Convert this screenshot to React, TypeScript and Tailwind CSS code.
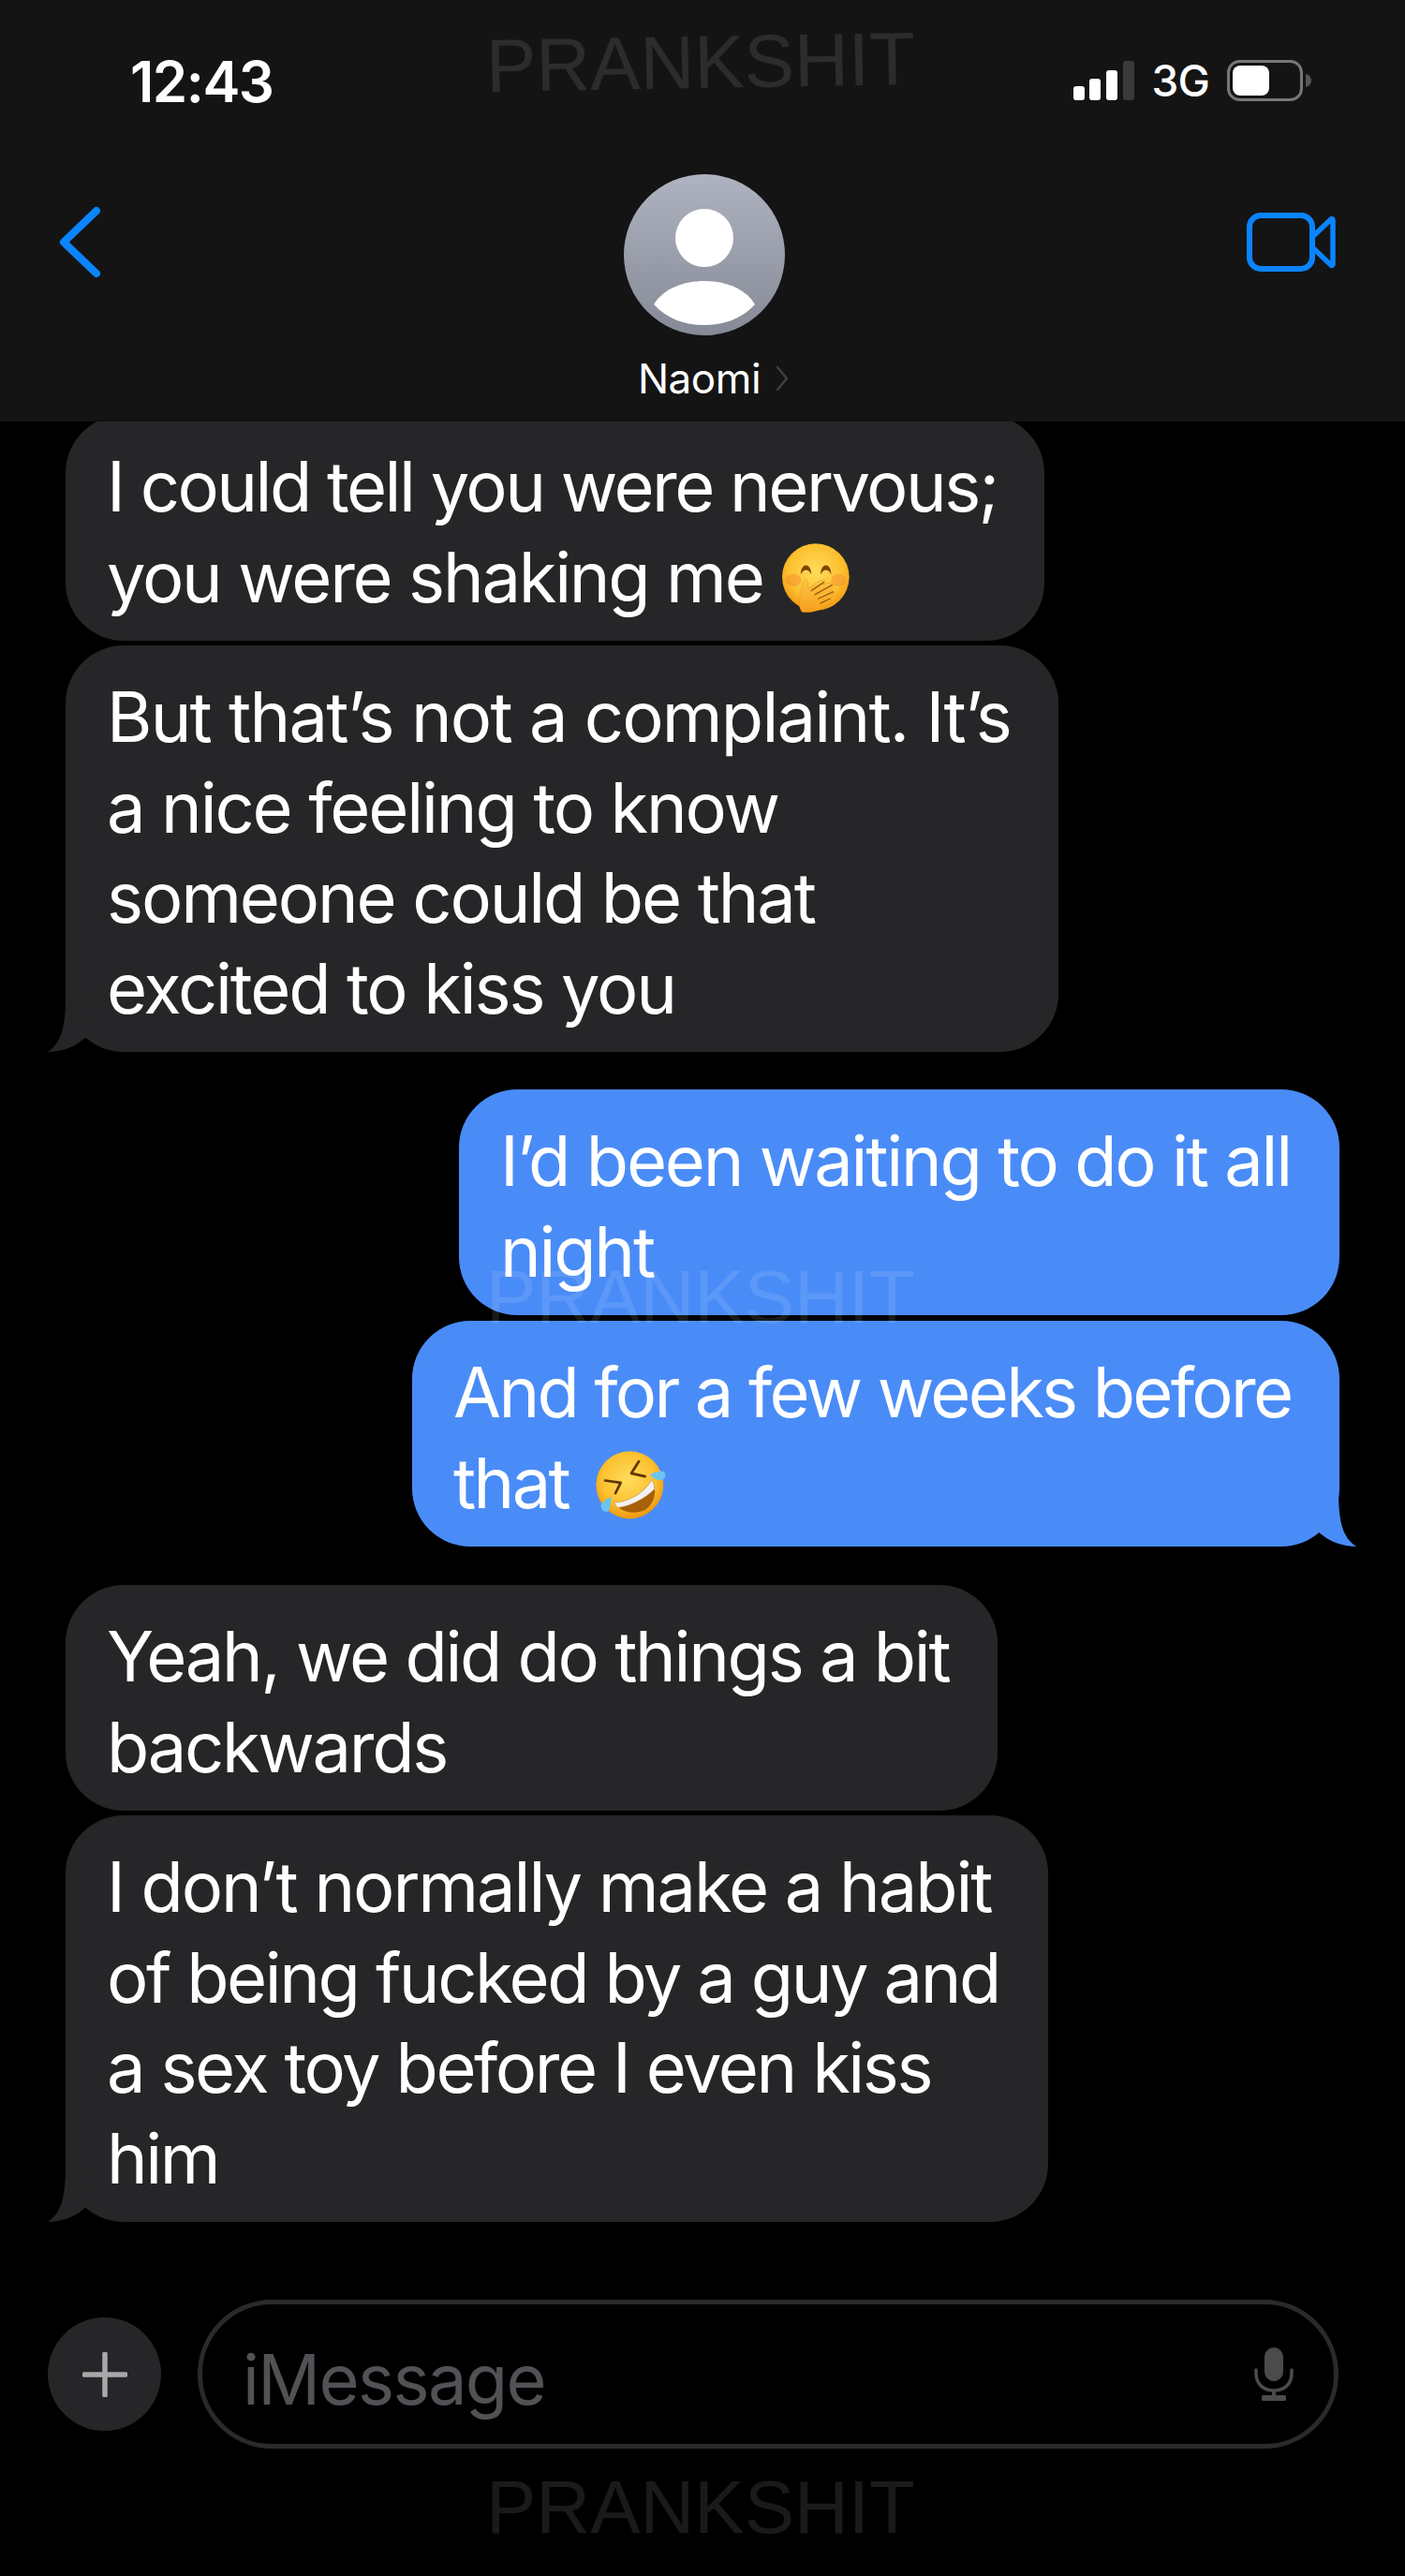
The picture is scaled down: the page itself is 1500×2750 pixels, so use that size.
import type { ReactNode } from 'react';

const TEXT = 'text-[74px] leading-[96.5px] text-white whitespace-nowrap';

function HandEmoji() {
  return (
    <svg viewBox="168 80 217 225" className="ml-[20px] inline-block h-[75px] w-[72px] align-[-12px]">
      <defs>
        <radialGradient id="faceA" cx="50%" cy="42%" r="58%">
          <stop offset="0%" stopColor="#ffdc5c" />
          <stop offset="70%" stopColor="#fcc02e" />
          <stop offset="100%" stopColor="#f39a13" />
        </radialGradient>
        <linearGradient id="handA" x1="0" y1="0" x2="0" y2="1">
          <stop offset="0%" stopColor="#fcc64a" />
          <stop offset="100%" stopColor="#f59e1a" />
        </linearGradient>
      </defs>
      <circle cx="276" cy="188" r="108" fill="url(#faceA)" />
      <ellipse cx="204" cy="198" rx="26" ry="20" fill="#f77f30" opacity="0.4" />
      <ellipse cx="350" cy="198" rx="24" ry="20" fill="#f77f30" opacity="0.4" />
      <path d="M228 180 C228 140 262 140 262 180 C254 160 236 160 228 180Z" fill="#7a4300" />
      <path d="M292 180 C292 140 326 140 326 180 C318 160 300 160 292 180Z" fill="#7a4300" />
      <path
        d="M232 300 C220 285 222 262 228 240 C230 225 232 205 243 197 C252 196 252 212 252 226 C270 212 288 198 302 196 C310 198 306 208 298 214 C312 206 326 204 332 212 C334 220 326 226 318 232 C328 228 338 234 334 242 C330 252 322 254 318 258 C328 256 330 266 322 272 C304 288 270 306 232 300Z"
        fill="url(#handA)"
        stroke="#e8900f"
        strokeWidth="1.5"
      />
      <path d="M262 232 L302 205 M274 244 L328 214 M284 258 L332 236 M292 272 L322 258" stroke="#9c5a08" strokeWidth="4" strokeLinecap="round" fill="none" />
    </svg>
  );
}

function RoflEmoji() {
  return (
    <svg viewBox="110 75 225 218" className="ml-[29px] inline-block h-[73px] w-[75px] align-[-12px]">
      <defs>
        <radialGradient id="faceB" cx="48%" cy="42%" r="58%">
          <stop offset="0%" stopColor="#ffdc5c" />
          <stop offset="70%" stopColor="#fcc02e" />
          <stop offset="100%" stopColor="#f0960f" />
        </radialGradient>
      </defs>
      <circle cx="219" cy="183" r="108" fill="url(#faceB)" />
      <path d="M248 108 L224 146 L268 156" fill="none" stroke="#5f3604" strokeWidth="8" strokeLinejoin="round" strokeLinecap="round" />
      <path d="M140 169 L190 176 L173 210" fill="none" stroke="#5f3604" strokeWidth="8" strokeLinejoin="round" strokeLinecap="round" />
      <path d="M168 240 C215 238 265 210 290 166 C308 200 300 240 270 262 C235 280 190 272 168 240Z" fill="#a8600a" />
      <path d="M168 240 C215 238 265 210 290 166 C296 176 298 186 299 196 C270 225 225 250 182 256 C176 251 172 246 168 240Z" fill="#f2f2f2" stroke="#c98a2e" strokeWidth="1.5" />
      <path d="M284 150 C294 142 316 138 328 140 C338 150 334 166 318 168 C304 168 292 160 284 150Z" fill="#6cc4ee" />
      <path d="M160 222 C158 236 158 258 150 268 C138 272 124 262 128 246 C134 234 148 226 160 222Z" fill="#6cc4ee" />
    </svg>
  );
}

function Tail({ side, fill }: { side: 'left' | 'right'; fill: string }) {
  return (
    <svg
      viewBox="0 0 50 63"
      className={`absolute bottom-0 h-[63px] w-[50px] ${side === 'right' ? 'right-[-19px]' : 'left-[-20px] -scale-x-100'}`}
    >
      <path d="M30 0 C30 30 32 52 49 63 C35 63 20 58 8 47 L0 0 Z" fill={fill} />
    </svg>
  );
}

function Bubble({ mine, width, tail, gap, tracking, children }: { mine?: boolean; width: string; tail?: boolean; gap: string; tracking: string; children: ReactNode }) {
  return (
    <div className={`relative rounded-[62px] pb-[20px] pl-[44px] pt-[28px] ${width} ${gap} ${tracking} ${mine ? 'self-end bg-[#4a8cf7]' : 'self-start bg-[#262628]'} ${TEXT}`}>
      {children}
      {tail && <Tail side={mine ? 'right' : 'left'} fill={mine ? '#4a8cf7' : '#262628'} />}
    </div>
  );
}

function Watermark({ className }: { className: string }) {
  return (
    <div className={`pointer-events-none absolute left-[519px] font-['Liberation_Sans',sans-serif] text-[80px] leading-none text-white/10 ${className}`}>
      PRANKSHIT
    </div>
  );
}

function StatusBar() {
  return (
    <div className="flex h-[172px] items-start justify-between pl-[139px] pr-[100px] pt-[52px]">
      <span className="text-[60px] font-semibold leading-[70px] tracking-[-0.025em] text-white">12:43</span>
      <div className="flex items-center gap-[19px] pt-[12px]">
        <svg viewBox="0 0 65 42" className="h-[42px] w-[65px]">
          <rect x="0" y="27" width="12" height="15" rx="3" fill="#fff" />
          <rect x="17" y="19" width="12" height="23" rx="3" fill="#fff" />
          <rect x="35" y="10" width="12" height="32" rx="3" fill="#fff" />
          <rect x="53" y="0" width="12" height="42" rx="3" fill="#3a3a3c" />
        </svg>
        <span className="text-[46px] font-medium leading-[44px] tracking-[-0.02em] text-white">3G</span>
        <svg viewBox="0 0 90 44" className="h-[44px] w-[90px]">
          <rect x="1.5" y="1.5" width="78" height="41" rx="12" fill="none" stroke="#77777a" strokeWidth="3" />
          <rect x="6" y="6" width="39" height="32" rx="8" fill="#fff" />
          <path d="M84 15 C88 16 90 19 90 22 C90 25 88 28 84 29Z" fill="#55555a" />
        </svg>
      </div>
    </div>
  );
}

function NavBar() {
  return (
    <div className="flex items-start justify-between pl-[62px] pr-[74px]">
      <svg viewBox="0 0 46 77" className="mt-[48px] h-[77px] w-[46px]">
        <path d="M41 5 L6 38.5 L41 72" fill="none" stroke="#0a84ff" strokeWidth="8" strokeLinecap="round" strokeLinejoin="round" />
      </svg>
      <div className="ml-[64px] flex w-[200px] flex-col items-center pt-[14px]">
        <svg viewBox="0 0 172 172" className="h-[172px] w-[172px]">
          <defs>
            <linearGradient id="avatar" x1="0" y1="0" x2="0" y2="1">
              <stop offset="0%" stopColor="#afb3c0" />
              <stop offset="100%" stopColor="#858a96" />
            </linearGradient>
          </defs>
          <circle cx="86" cy="86" r="86" fill="url(#avatar)" />
          <circle cx="86" cy="68" r="31" fill="#fff" />
          <path d="M32 139 C42 122 64 114 86 114 C108 114 130 122 140 139 C126 154 108 161 86 161 C64 161 46 154 32 139Z" fill="#fff" />
        </svg>
        <div className="ml-[20px] mt-[21px] flex items-center gap-[16px]">
          <span className="text-[44px] font-normal leading-[50px] tracking-[-0.01em] text-white">Naomi</span>
          <svg viewBox="0 0 14 28" className="h-[28px] w-[14px]">
            <path d="M2 2 L12 14 L2 26" fill="none" stroke="#3f3f42" strokeWidth="2.5" strokeLinecap="round" />
          </svg>
        </div>
      </div>
      <svg viewBox="0 0 95 63" className="mt-[55px] h-[63px] w-[95px]">
        <rect x="3" y="3" width="67" height="57" rx="12" fill="none" stroke="#0a84ff" strokeWidth="6" />
        <path d="M70 26 L90 7 C91 6 92 7 92 8 L92 55 C92 56 91 57 90 56 L70 37" fill="none" stroke="#0a84ff" strokeWidth="5.5" strokeLinejoin="round" />
      </svg>
    </div>
  );
}

function Composer() {
  return (
    <div className="mb-[136px] flex items-center gap-[39px] pl-[51px] pr-[71px]">
      <div className="flex h-[121px] w-[121px] shrink-0 items-center justify-center rounded-full bg-[#262628]">
        <svg viewBox="0 0 48 48" className="h-[48px] w-[48px]">
          <path d="M24 2 V46 M2 24 H46" stroke="#a8a8ab" strokeWidth="5.5" strokeLinecap="round" />
        </svg>
      </div>
      <div className="flex h-[159px] flex-1 items-center justify-between rounded-full border-[5px] border-[#2a2a2c] pl-[43px] pr-[43px]">
        <span className="pt-[10px] text-[74px] leading-[96px] tracking-[-0.022em] text-[#515156]">iMessage</span>
        <svg viewBox="0 0 42 57" className="h-[57px] w-[42px]">
          <rect x="11" y="0" width="20" height="36" rx="10" fill="#4b4b4e" />
          <path d="M2 24 V28 C2 39 10 46 21 46 C32 46 40 39 40 28 V24" fill="none" stroke="#4b4b4e" strokeWidth="3.5" strokeLinecap="round" />
          <path d="M21 46 V54" stroke="#4b4b4e" strokeWidth="4" />
          <rect x="8" y="51" width="26" height="6" rx="1.5" fill="#4b4b4e" />
        </svg>
      </div>
    </div>
  );
}

export default function App() {
  return (
    <div className="relative flex h-[2750px] w-[1500px] flex-col overflow-hidden bg-black font-['Inter',sans-serif]">
      <header className="h-[450px] shrink-0 bg-[#141414]">
        <StatusBar />
        <NavBar />
      </header>

      <main className="flex flex-1 flex-col overflow-hidden px-[70px]">
        <Bubble width="w-[1045px]" gap="-mt-[7px]" tracking="tracking-[-0.034em]">
          I could tell you were nervous;
          <br />
          <span className="tracking-[-0.03em]">you were shaking me</span><HandEmoji />
        </Bubble>
        <Bubble width="w-[1060px]" gap="mt-[5px]" tracking="tracking-[-0.029em]" tail>
          <span className="tracking-[-0.024em]">But that’s not a complaint. It’s</span>
          <br />
          a nice feeling to know
          <br />
          someone could be that
          <br />
          excited to kiss you
        </Bubble>
        <Bubble mine width="w-[940px]" gap="mt-[40px]" tracking="tracking-[-0.03em]">
          I’d been waiting to do it all
          <br />
          night
        </Bubble>
        <Bubble mine width="w-[990px]" gap="mt-[6px]" tracking="tracking-[-0.036em]" tail>
          And for a few weeks before
          <br />
          that<RoflEmoji />
        </Bubble>
        <Bubble width="w-[995px]" gap="mt-[41px]" tracking="tracking-[-0.031em]">
          Yeah, we did do things a bit
          <br />
          backwards
        </Bubble>
        <Bubble width="w-[1049px]" gap="mt-[5px]" tracking="tracking-[-0.033em]" tail>
          <span className="tracking-[-0.028em]">I don’t normally make a habit</span>
          <br />
          of being fucked by a guy and
          <br />
          a sex toy before I even kiss
          <br />
          him
        </Bubble>
      </main>

      <Composer />

      <Watermark className="top-[27px] -rotate-1" />
      <Watermark className="top-[1345px]" />
      <Watermark className="top-[2637px]" />
    </div>
  );
}
